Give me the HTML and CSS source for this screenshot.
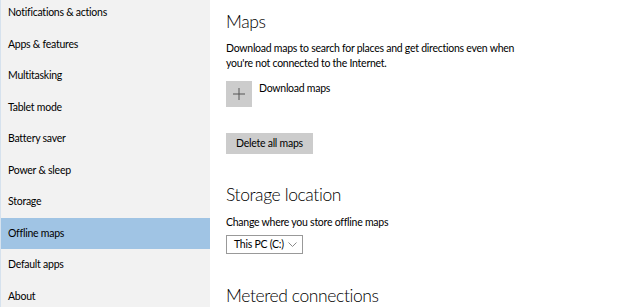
FILE: index.html
```html
<!DOCTYPE html>
<html lang="en">
<head>
  <meta charset="UTF-8" />
  <title>Offline maps</title>
  <link rel="stylesheet" href="styles.css">
</head>
<body>
  <div class="window">
    <ul class="nav">
      <li>Notifications &amp; actions</li>
      <li>Apps &amp; features</li>
      <li>Multitasking</li>
      <li>Tablet mode</li>
      <li>Battery saver</li>
      <li>Power &amp; sleep</li>
      <li>Storage</li>
      <li class="active">Offline maps</li>
      <li>Default apps</li>
      <li>About</li>
    </ul>

    <div class="content">
      <h2>Maps</h2>
      <p class="desc">Download maps to search for places and get directions even when you're not connected to the Internet.</p>
      <div class="add-row">
        <div class="add-btn">
          <svg width="12" height="12" viewBox="0 0 12 12"><path d="M6 0v12M0 6h12" stroke="#555" stroke-width="1" fill="none"/></svg>
        </div>
        <span>Download maps</span>
      </div>
      <button class="btn">Delete all maps</button>

      <h2 class="sec">Storage location</h2>
      <p class="label">Change where you store offline maps</p>
      <div class="select">
        <span>This PC (C:)</span>
        <svg width="9" height="5" viewBox="0 0 9 5"><path d="M0.5 0.5l4 4l4-4" stroke="#8a8a8a" stroke-width="1" fill="none"/></svg>
      </div>

      <h2 class="sec last">Metered connections</h2>
    </div>
  </div>
</body>
</html>
```

FILE: styles.css
```css
* { box-sizing: border-box; margin: 0; padding: 0; }
html, body {
  width: 100%;
  height: 100%;
  background: #fff;
  font-family: Lato, "Noto Sans", sans-serif;
  font-size: 10.5px;
  letter-spacing: -0.25px;
  line-height: 15px;
  color: #000;
  overflow: hidden;
}
.window { display: flex; height: 100%; }
.nav {
  list-style: none;
  width: 210px;
  flex: none;
  background: #f2f2f2;
  border-left: 1px solid #d6e2ee;
  margin-top: -3px;
}
.nav li {
  height: 31.5px;
  line-height: 31.5px;
  padding-left: 7px;
  white-space: nowrap;
}
.nav li.active { background: #a0c4e4; }
.content { padding-left: 16px; padding-top: 10px; white-space: nowrap; }
h2 {
  font-weight: 300;
  font-size: 17.5px;
  letter-spacing: -0.4px;
  line-height: 24px;
  height: 24px;
}
.desc { margin-top: 7px; width: 292px; white-space: normal; }
.add-row { display: flex; margin-top: 10px; }
.add-row span { margin-left: 7px; }
.add-btn {
  width: 26px; height: 26px; background: #ccc;
  display: flex; align-items: center; justify-content: center;
}
.btn {
  display: block;
  margin-top: 26px;
  height: 21px;
  padding: 0 10px;
  border: none;
  background: #ccc;
  font: inherit;
  letter-spacing: inherit;
  color: #000;
}
.sec { margin-top: 29px; }
.label { margin-top: 8px; }
.select {
  margin-top: 5px;
  width: 77px; height: 19px;
  border: 1px solid #999;
  display: flex; align-items: center; justify-content: space-between;
  padding: 0 5px 0 7px;
}
.sec.last { margin-top: 30px; }
```
